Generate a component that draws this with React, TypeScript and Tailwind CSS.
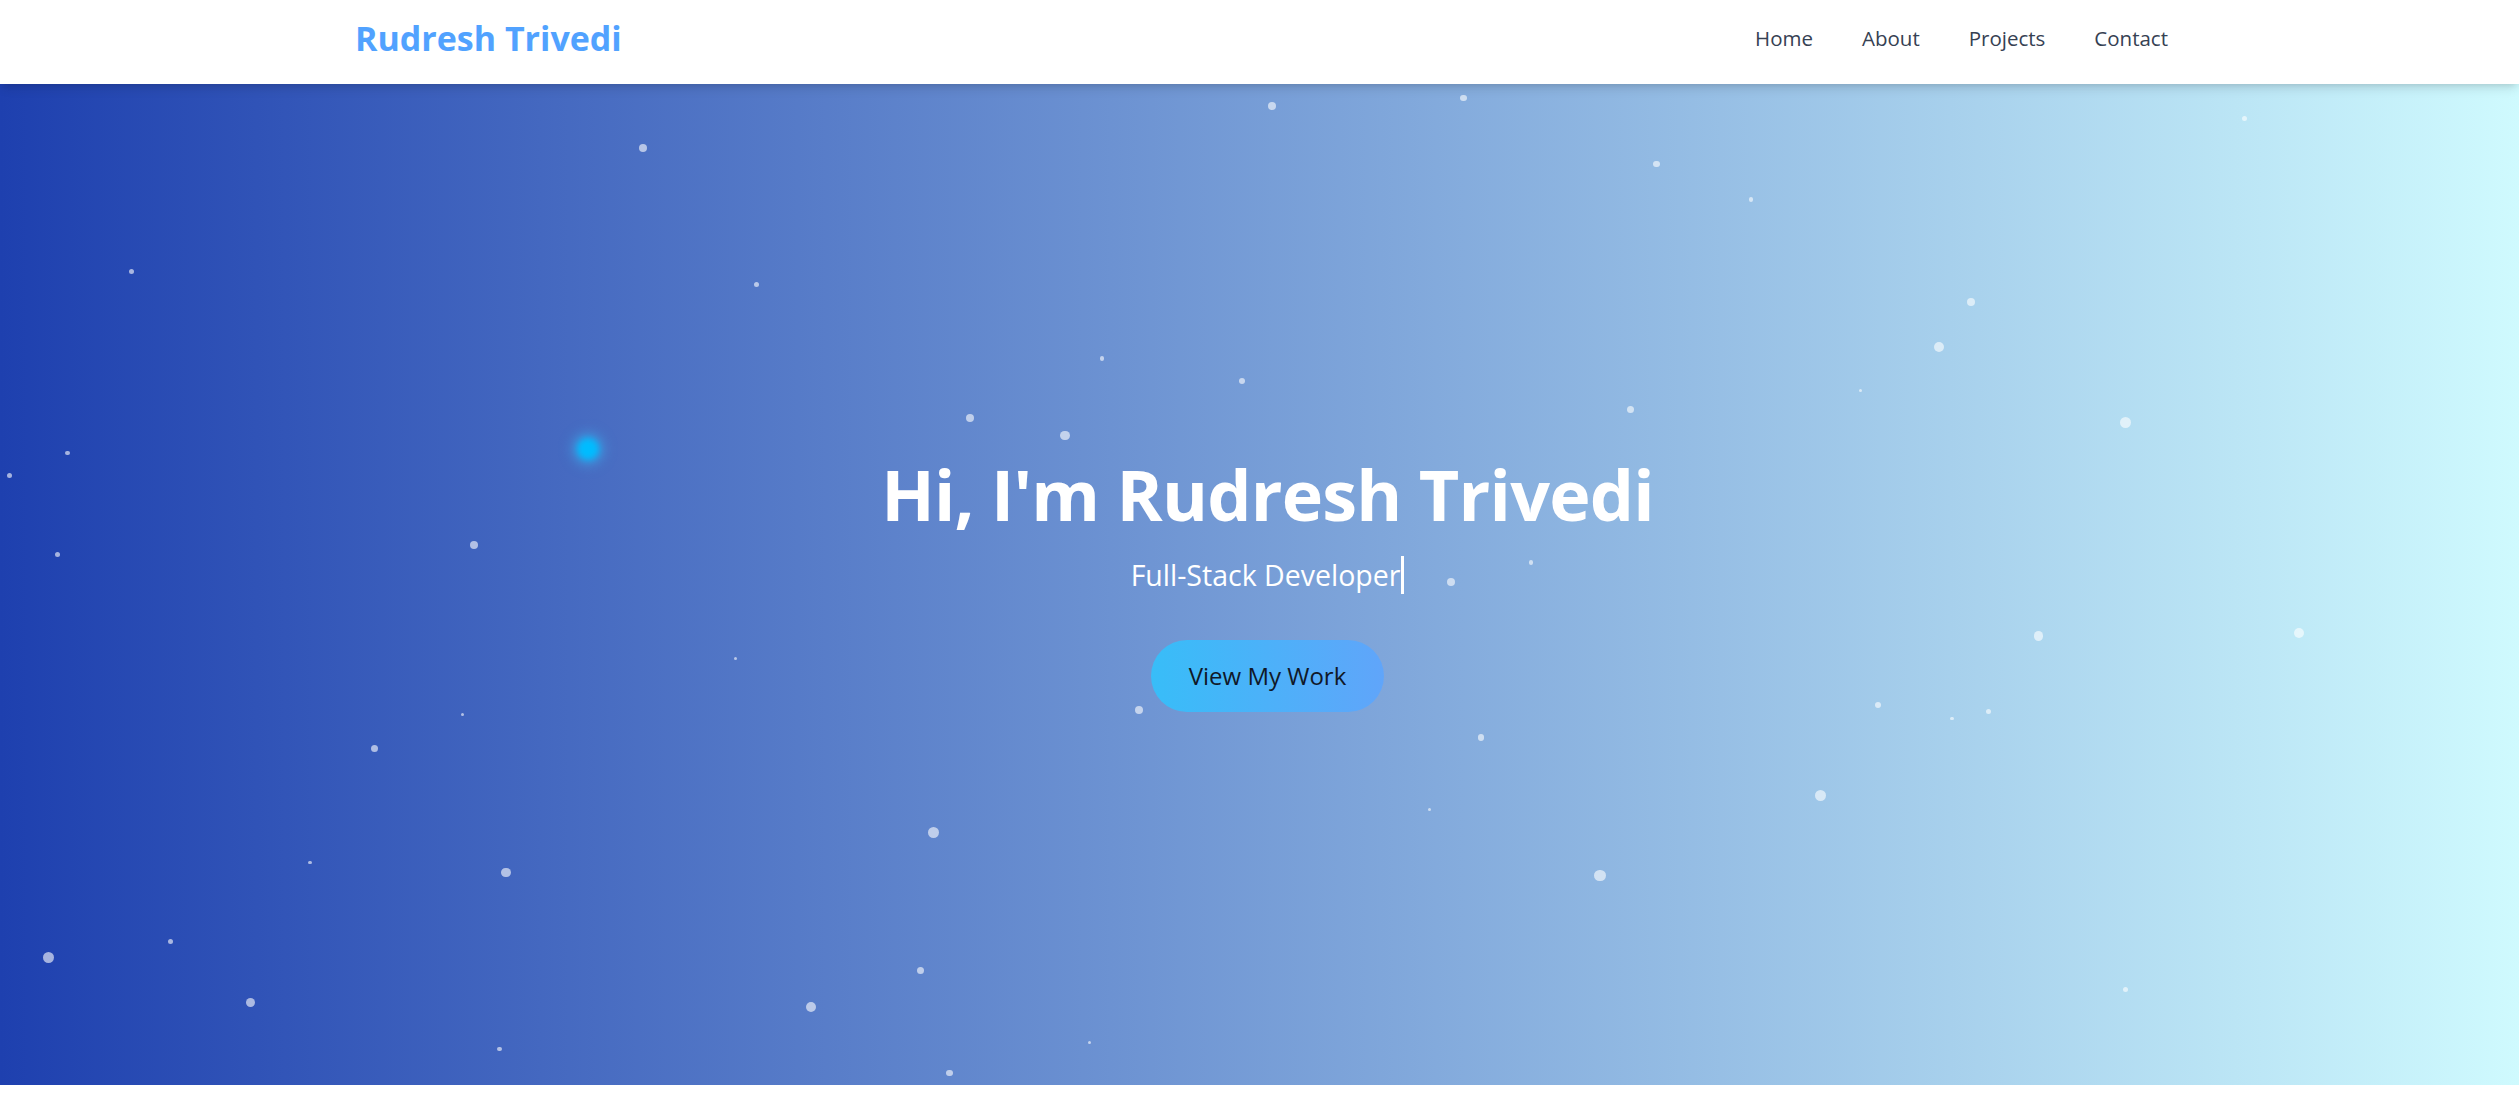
import React from "react";

// dots measured on the shrunk preview (x, y, radius) and scaled up to the full page
const SCALE = 2519 / 1568;
const HEADER_H = 84;

const DOTS: [number, number, number][] = [
  [400, 92, 2.5], [792, 66, 2.5], [911, 61, 2], [1031, 102, 2], [1090, 124, 1.5],
  [1397, 74, 1.5], [82, 169, 1.5], [471, 177, 1.5], [1227, 188, 2.5], [1207, 216, 3],
  [686, 223, 1.5], [773, 237, 2], [1158, 243, 1], [1015, 255, 2], [604, 260, 2.5],
  [663, 271, 3], [1323, 263, 3.5], [42, 282, 1.5], [6, 296, 1.5], [295, 339, 2.5],
  [36, 345, 1.5], [953, 350, 1.5], [903, 362, 2.5], [1269, 396, 3], [1431, 394, 3],
  [458, 410, 1], [709, 442, 2.5], [1169, 439, 2], [1238, 443, 1.5], [1215, 447, 1],
  [288, 445, 1], [922, 459, 2], [233, 466, 2], [849, 299, 1.5], [1133, 495, 3.5],
  [890, 504, 1], [581, 518, 3.5], [193, 537, 1], [315, 543, 3], [996, 545, 3.5],
  [106, 586, 1.5], [30, 596, 3.5], [573, 604, 2], [156, 624, 3], [505, 627, 3],
  [1323, 616, 1.5], [678, 649, 1], [311, 653, 1.5], [591, 668, 2],
];

function Particles() {
  return (
    <div aria-hidden className="pointer-events-none absolute inset-0 overflow-hidden">
      {DOTS.map(([x, y, r], i) => {
        const d = r * 2 * SCALE;
        return (
          <span
            key={i}
            className="absolute rounded-full bg-white/60"
            style={{
              left: x * SCALE - d / 2,
              top: y * SCALE - HEADER_H - d / 2,
              width: d,
              height: d,
            }}
          />
        );
      })}
      <span className="absolute left-[577px] top-[354px] h-[22px] w-[22px] rounded-full bg-sky-400 blur-[3px] shadow-[0_0_12px_4px_rgba(56,189,248,0.6)]" />
    </div>
  );
}

function Header() {
  return (
    <header className="relative z-10 h-[84px] bg-white shadow-[0_6px_10px_-2px_rgba(0,0,0,0.12),0_3px_6px_-3px_rgba(0,0,0,0.1)]">
      <div className="flex h-full items-center justify-between pb-[9px] pl-[355px] pr-[351px]">
        <a href="#" className="text-[34px] font-bold leading-[50px] text-blue-400">
          Rudresh Trivedi
        </a>
        <nav className="flex items-center gap-[49px]">
          {["Home", "About", "Projects", "Contact"].map((item) => (
            <a key={item} href={`#${item.toLowerCase()}`} className="text-[20.5px] font-medium leading-[32px] text-gray-700">
              {item}
            </a>
          ))}
        </nav>
      </div>
    </header>
  );
}

function Hero() {
  return (
    <section
      id="home"
      className="relative flex h-[1001px] flex-col items-center justify-center overflow-hidden bg-[linear-gradient(to_right,#1e40af,#cffafe)] pl-[16px]"
    >
      <Particles />
      <div className="relative flex flex-col items-center text-center">
        <h1 className="mb-[24px] text-[70px] font-bold leading-[72px] tracking-[-0.8px] text-white">
          Hi, I'm Rudresh Trivedi
        </h1>
        <p className="mb-[44px] text-[28.5px] leading-[42px] text-white">
          <span className="border-r-[3px] border-white pr-[1px]">Full-Stack Developer</span>
        </p>
        <a
          href="#projects"
          className="rounded-full bg-[linear-gradient(to_right,#38bdf8,#60a5fa)] px-[38px] py-[18px] text-[24px] font-medium leading-[36px] text-gray-900"
        >
          View My Work
        </a>
      </div>
    </section>
  );
}

export default function App() {
  return (
    <div className="min-h-[1111px] bg-white font-['Open_Sans',sans-serif]">
      <Header />
      <Hero />
    </div>
  );
}
